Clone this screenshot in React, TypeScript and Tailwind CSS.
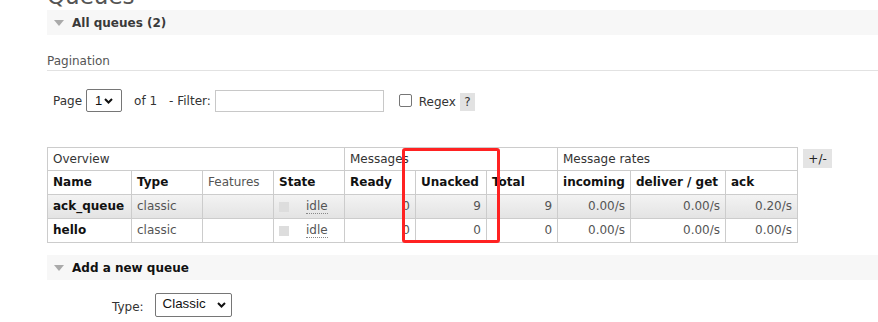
import React from "react";

function Chevron() {
  return (
    <svg width="9" height="6" viewBox="0 0 9 6" className="block">
      <path d="M1 1 L4.5 4.5 L8 1" fill="none" stroke="#111" strokeWidth="2" />
    </svg>
  );
}

function Triangle() {
  return (
    <svg width="10" height="6" viewBox="0 0 10 6" className="block">
      <path d="M0 0 L10 0 L5 6 Z" fill="#aaaaaa" />
    </svg>
  );
}

const colWidths = ["w-[84px]", "w-[71px]", "w-[71px]", "w-[71px]", "w-[71px]", "w-[71px]", "w-[71px]", "w-[73px]", "w-[95px]", "w-[72px]"];

type Row = {
  name: string;
  ready: string;
  unacked: string;
  total: string;
  incoming: string;
  deliver: string;
  ack: string;
  alt: boolean;
};

const rows: Row[] = [
  { name: "ack_queue", ready: "0", unacked: "9", total: "9", incoming: "0.00/s", deliver: "0.00/s", ack: "0.20/s", alt: true },
  { name: "hello", ready: "0", unacked: "0", total: "0", incoming: "0.00/s", deliver: "0.00/s", ack: "0.00/s", alt: false },
];

export default function App() {
  const base = "border border-[#cccccc] px-[5px] py-0 leading-[15px] whitespace-nowrap";
  const th1 = `${base} h-[23px]`;
  const td = `${base} h-[24px]`;
  return (
    <div className="relative w-[878px] h-[322px] overflow-hidden bg-white font-['DejaVu_Sans',Verdana,sans-serif] text-[12px] text-[#484848]">
      <div className="pl-[47px]">
        <h1 className="-mt-[15px] text-[23px] leading-[23px] text-[#555555]">Queues</h1>

        <div className="mt-[2px] h-[25px] bg-[#f7f7f7] flex items-center pl-[7px]">
          <Triangle />
          <span className="ml-[8px] font-bold text-[#3a3a3a]">All queues (2)</span>
        </div>

        <div className="mt-[16px] h-[20px] leading-[20px] border-b border-[#e2e2e2] text-[#555555]">Pagination</div>

        <div className="mt-[18px] h-[23px] flex items-center pl-[6px] text-[#333333]">
          <span className="mt-[1px]">Page</span>
          <div className="ml-[4px] w-[36px] h-[23px] border border-[#767676] rounded-[2px] flex items-center pl-[8px] pr-[8px] justify-between font-['Liberation_Sans',Arial,sans-serif] text-[13px] text-[#111]">
            <span>1</span>
            <Chevron />
          </div>
          <span className="ml-[12px]">of 1</span>
          <span className="ml-[12px]">- Filter:</span>
          <div className="ml-[4px] w-[169px] h-[22px] border border-[#c8c8c8]" />
          <div className="ml-[15px] w-[13px] h-[13px] border border-[#767676] rounded-[2px]" />
          <span className="ml-[7px] mt-[2px]">Regex</span>
          <span className="ml-[4px] mt-[3px] w-[15px] h-[18px] bg-[#e2e2e2] flex items-center justify-center">?</span>
        </div>

        <div className="mt-[35px] flex items-start">
          <table className="table-fixed border-collapse w-[750px]">
            <colgroup>
              {colWidths.map((w, i) => (
                <col key={i} className={w} />
              ))}
            </colgroup>
            <thead>
              <tr className="bg-white text-[#333333]">
                <th colSpan={4} className={`${th1} text-left font-normal`}>Overview</th>
                <th colSpan={3} className={`${th1} text-left font-normal`}>Messages</th>
                <th colSpan={3} className={`${th1} text-left font-normal`}>Message rates</th>
              </tr>
              <tr className="bg-white text-[#111111]">
                <th className={`${td} text-left font-bold`}>Name</th>
                <th className={`${td} text-left font-bold`}>Type</th>
                <th className={`${td} text-left font-normal text-[#555555]`}>Features</th>
                <th className={`${td} text-left font-bold`}>State</th>
                <th className={`${td} text-left font-bold`}>Ready</th>
                <th className={`${td} text-left font-bold`}>Unacked</th>
                <th className={`${td} text-left font-bold`}>Total</th>
                <th className={`${td} text-left font-bold`}>incoming</th>
                <th className={`${td} text-left font-bold`}>deliver / get</th>
                <th className={`${td} text-left font-bold`}>ack</th>
              </tr>
            </thead>
            <tbody>
              {rows.map((r) => (
                <tr key={r.name} className={r.alt ? "bg-linear-to-b from-[#f3f3f3] to-[#e3e3e3]" : "bg-white"}>
                  <td className={`${td} font-bold text-[#111111]`}>{r.name}</td>
                  <td className={`${td} text-[#555555]`}>classic</td>
                  <td className={td}></td>
                  <td className={td}>
                    <div className="flex items-center">
                      <span className="w-[10px] h-[10px] bg-[#dddddd]" />
                      <span className="ml-[17px] leading-[13px] border-b border-dotted border-[#888888] text-[#555555]">idle</span>
                    </div>
                  </td>
                  <td className={`${td} text-right text-[#555555]`}>{r.ready}</td>
                  <td className={`${td} text-right text-[#555555]`}>{r.unacked}</td>
                  <td className={`${td} text-right text-[#555555]`}>{r.total}</td>
                  <td className={`${td} text-right text-[#555555]`}>{r.incoming}</td>
                  <td className={`${td} text-right text-[#555555]`}>{r.deliver}</td>
                  <td className={`${td} text-right text-[#555555]`}>{r.ack}</td>
                </tr>
              ))}
            </tbody>
          </table>
          <div className="ml-[5px] mt-[2px] w-[29px] h-[19px] bg-[#e4e4e4] flex items-center justify-center text-[#222222]">+/-</div>
        </div>

        <div className="mt-[12px] h-[25px] bg-[#f7f7f7] flex items-center pl-[7px]">
          <Triangle />
          <span className="ml-[8px] font-bold text-[#111111]">Add a new queue</span>
        </div>

        <div className="mt-[13px] flex items-center pl-[65px]">
          <span className="text-[#333333] mt-[3px]">Type:</span>
          <div className="ml-[11px] w-[77px] h-[24px] border border-[#767676] rounded-[2px] flex items-center justify-between pl-[7px] pr-[5px] font-['Liberation_Sans',Arial,sans-serif] text-[13.33px] text-[#111]">
            <span className="-mt-[2px]">Classic</span>
            <Chevron />
          </div>
        </div>
      </div>

      <div className="absolute left-[402px] top-[148px] w-[98px] h-[95px] border-[3px] border-[#ff2222] rounded-[3px]" />
    </div>
  );
}
